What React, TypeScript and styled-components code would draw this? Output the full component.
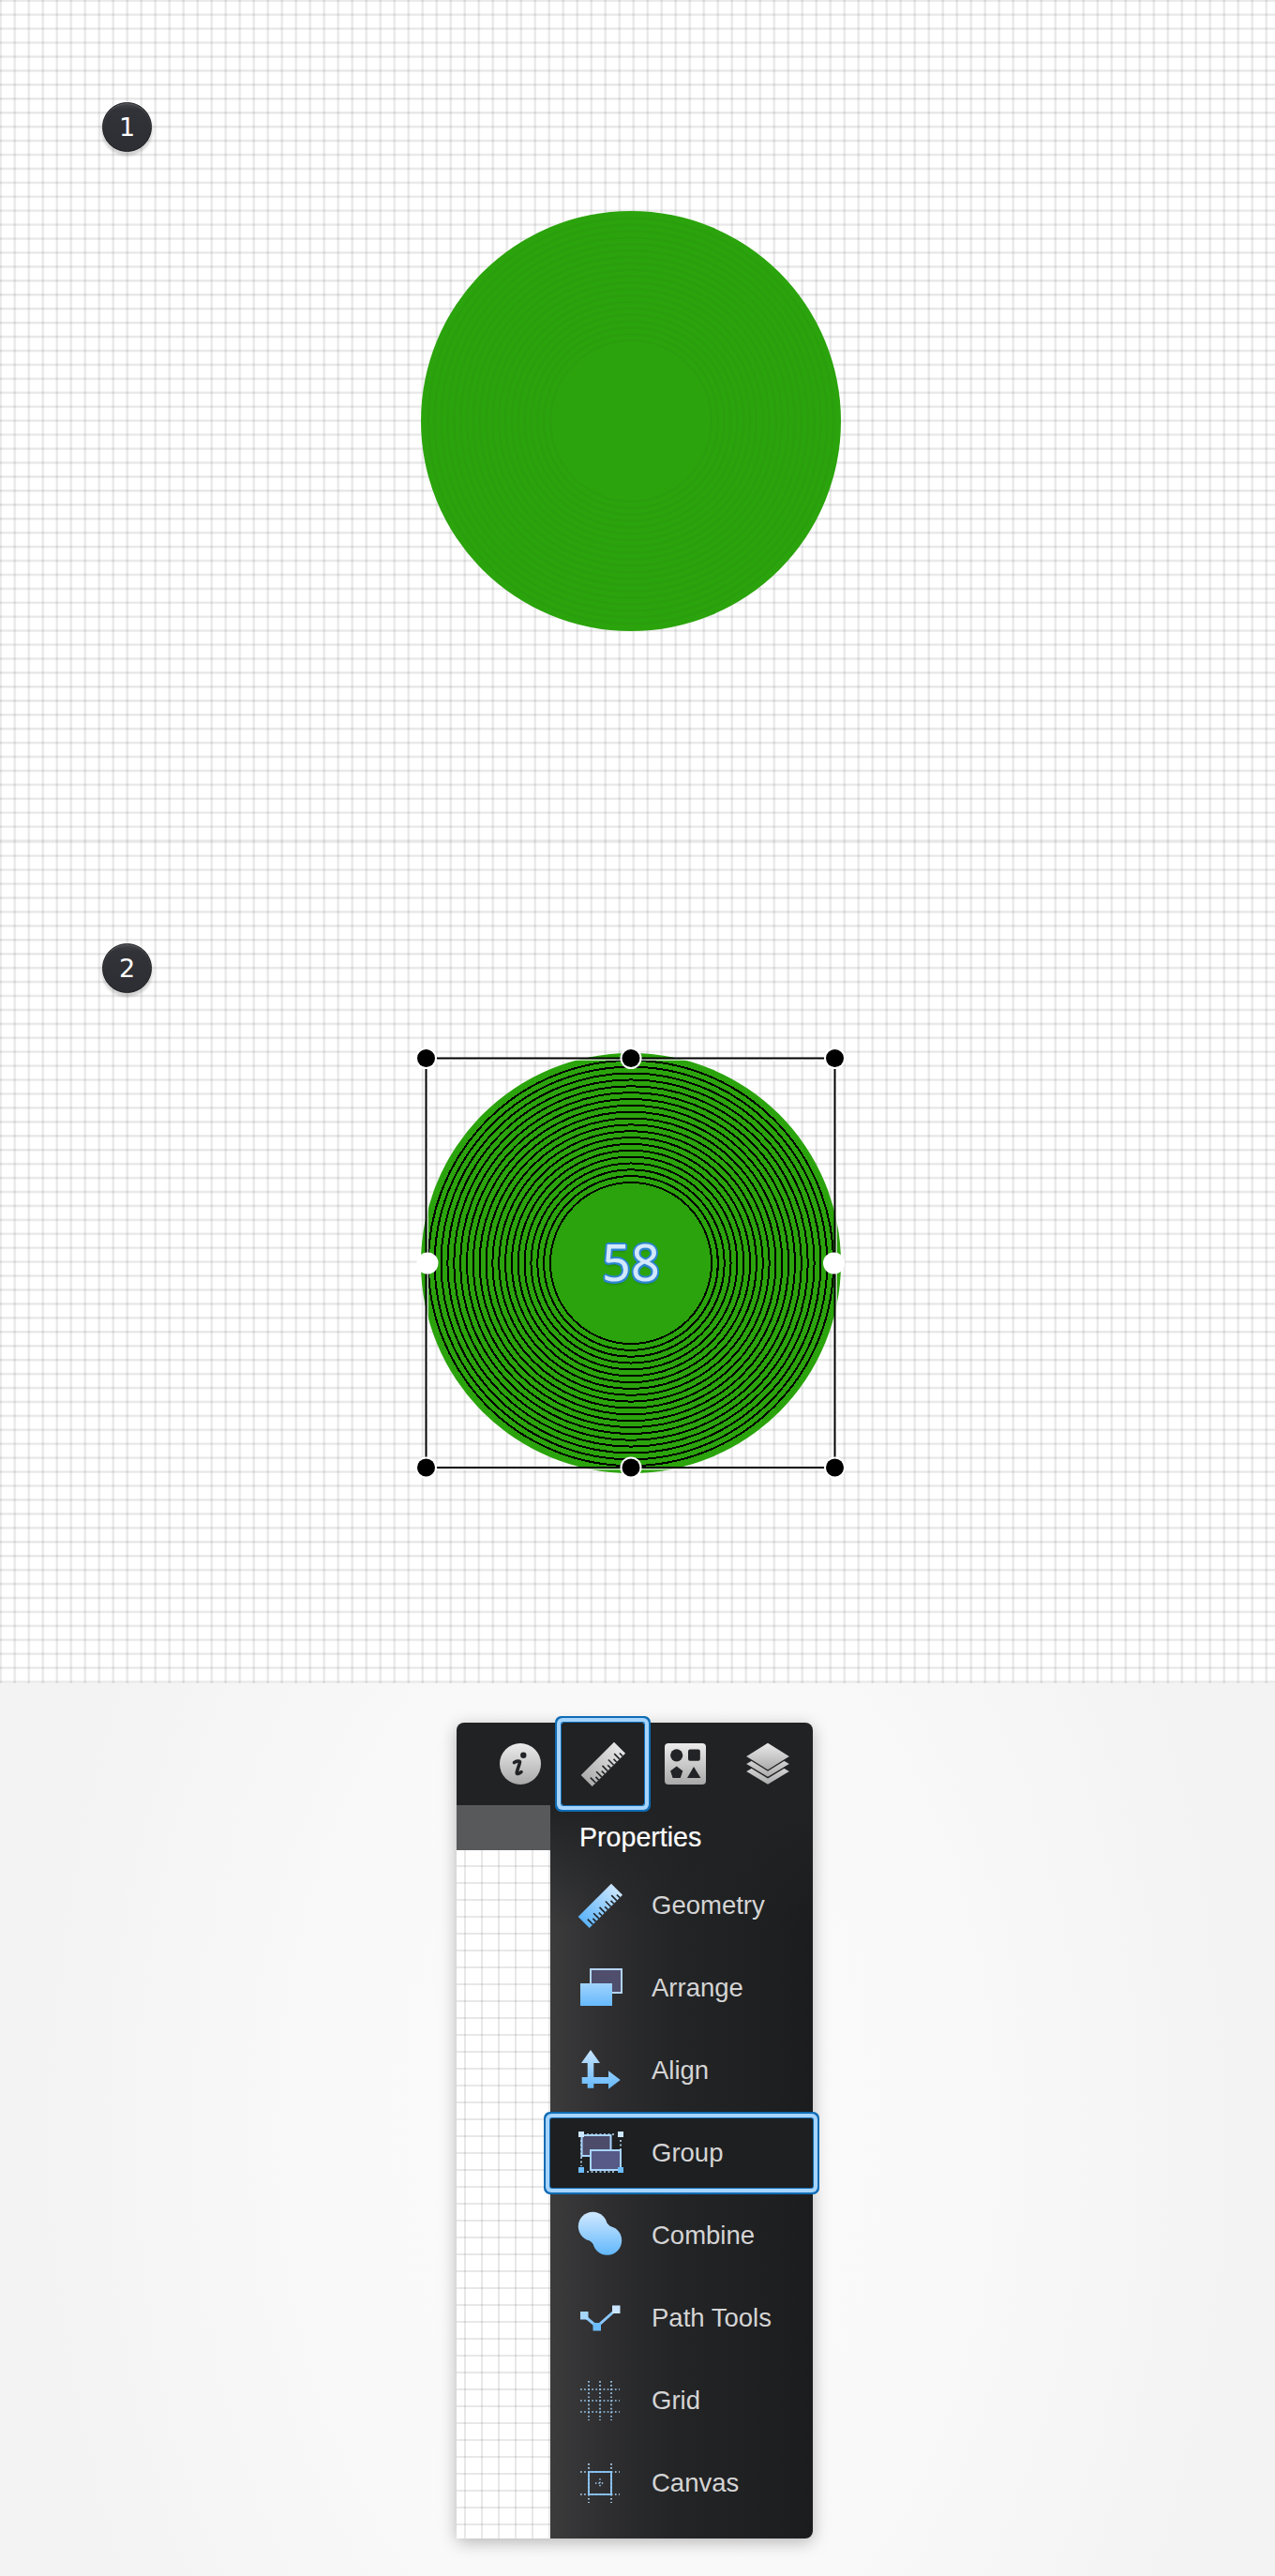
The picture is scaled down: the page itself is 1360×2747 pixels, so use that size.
import React from 'react'
import styled, { createGlobalStyle, css } from 'styled-components'

const GlobalStyle = createGlobalStyle`
  html, body {
    margin: 0;
    padding: 0;
    background: #f3f3f3;
  }
  body {
    font-family: 'Liberation Sans', Arial, sans-serif;
  }
`

const softLine = (angle: string, period: string) => `repeating-linear-gradient(
  ${angle},
  rgba(30, 30, 40, 0.09) 0,
  rgba(30, 30, 40, 0.11) 1px,
  rgba(30, 30, 40, 0.05) 2px,
  rgba(30, 30, 40, 0) 2.6px,
  rgba(30, 30, 40, 0) calc(${period} - 1px),
  rgba(30, 30, 40, 0.09) ${period}
)`

const Page = styled.div`
  width: 1360px;
  height: 2747px;
  overflow: hidden;
`

const Step = styled.section<{ $height: number; $gap: number }>`
  height: ${(p) => p.$height}px;
  padding: 109px 0 0 109px;
  box-sizing: border-box;
  display: flex;
  flex-direction: column;
  align-items: flex-start;
  gap: ${(p) => p.$gap}px;
  background-color: #fff;
  background-image: ${softLine('90deg', '15px')}, ${softLine('180deg', '14.93px')};
`

const Badge = styled.div`
  width: 53px;
  height: 53px;
  border-radius: 50%;
  box-sizing: border-box;
  border: 1px solid #17181b;
  background: linear-gradient(180deg, #46474c 0, #323338 14%, #2d2e33 100%);
  box-shadow: 0 3px 3px 1px rgba(0, 0, 0, 0.17), inset 0 1px 1px rgba(255, 255, 255, 0.16);
  color: #fff;
  font-family: 'DejaVu Sans', sans-serif;
  font-size: 27px;
  display: flex;
  align-items: center;
  justify-content: center;
`

const Figure = styled.div`
  position: relative;
  width: 480px;
  height: 480px;
  margin-left: 324px;
  & > svg {
    display: block;
  }
`

const Counter = styled.span`
  position: absolute;
  left: 0;
  right: 0;
  top: 196px;
  text-align: center;
  font-family: 'Noto Sans', sans-serif;
  font-size: 54px;
  line-height: 84px;
  color: #d2e8fd;
  text-shadow: 2px 0 0 #2c86cf, -2px 0 0 #2c86cf, 0 2px 0 #2c86cf, 0 -2px 0 #2c86cf, 1.5px 1.5px 0 #2c86cf,
    -1.5px 1.5px 0 #2c86cf, 1.5px -1.5px 0 #2c86cf, -1.5px -1.5px 0 #2c86cf, 0 3px 2px rgba(0, 60, 20, 0.35);
`

const Footer = styled.footer`
  height: 952px;
  padding: 42px 0 0 487px;
  box-sizing: border-box;
  background: radial-gradient(ellipse 640px 1000px at 680px 480px, #fbfbfb 0, #f9f9f9 55%, #f3f3f3 100%);
`

const Panel = styled.div`
  width: 380px;
  height: 870px;
  display: flex;
  flex-direction: column;
  border-radius: 8px;
  box-shadow: 0 4px 18px rgba(0, 0, 0, 0.28);
`

const TabBar = styled.div`
  height: 88px;
  padding-left: 24px;
  display: flex;
  background: #212224;
  border-radius: 8px 8px 0 0;
`

const Tab = styled.div<{ $active?: boolean }>`
  position: relative;
  z-index: 2;
  width: 88px;
  height: 88px;
  display: flex;
  align-items: center;
  justify-content: center;
  border-radius: 2px;
  ${(p) =>
    p.$active &&
    css`
      box-shadow: 0 0 0 1px #0f6cb4, 0 0 0 5px #a6d4fd, 0 0 0 7px #0f6cb4;
    `}
`

const PanelBody = styled.div`
  flex: 1;
  display: flex;
  min-height: 0;
`

const CanvasPeek = styled.div`
  width: 100px;
  display: flex;
  flex-direction: column;
`

const RulerStrip = styled.div`
  height: 48px;
  background: #58595b;
`

const PeekGrid = styled.div`
  flex: 1;
  background-color: #fff;
  background-image: repeating-linear-gradient(
    90deg,
    #fff 0,
    #fff 8px,
    #e8e8e9 8px,
    #e8e8e9 10px,
    #fff 10px,
    #fff 18px
  );
  position: relative;
  &::after {
    content: '';
    position: absolute;
    inset: 0;
    background-image: repeating-linear-gradient(
      180deg,
      rgba(0, 0, 0, 0) 0,
      rgba(0, 0, 0, 0) 16px,
      rgba(0, 0, 0, 0.09) 16px,
      rgba(0, 0, 0, 0.09) 18px
    );
  }
`

const Menu = styled.div`
  flex: 1;
  padding-bottom: 15px;
  border-bottom-right-radius: 8px;
  background: linear-gradient(180deg, #212224 0, rgba(33, 34, 36, 0) 130px),
    linear-gradient(90deg, #3b3b3c 0, #2e2e30 22%, #232426 48%, #1f2022 78%, #1b1c1e 100%);
`

const MenuTitle = styled.div`
  height: 63px;
  padding: 6px 0 0 31px;
  box-sizing: border-box;
  display: flex;
  align-items: center;
  color: #fff;
  font-size: 28.6px;
  -webkit-text-stroke: 0.2px #fff;
`

const Row = styled.div<{ $active?: boolean }>`
  position: relative;
  height: 88px;
  padding-left: 31px;
  display: flex;
  align-items: center;
  gap: 33px;
  color: #d4d4d4;
  font-size: 27.5px;
  ${(p) =>
    p.$active &&
    css`
      &::before {
        content: '';
        position: absolute;
        inset: 7px 0;
        background: #1e1f21;
        border-radius: 2px;
        box-shadow: 0 0 0 1px #0f6cb4, 0 0 0 5px #a6d4fd, 0 0 0 7px #0f6cb4;
      }
      & > * {
        position: relative;
      }
    `}
`

const Icon = styled.svg`
  width: 44px;
  height: 44px;
  flex: none;
  overflow: visible;
`

const HiddenDefs = styled.svg`
  position: absolute;
  width: 0;
  height: 0;
`

const Defs = () => (
  <HiddenDefs>
    <defs>
      <linearGradient id="grey" x1="0" y1="0" x2="0" y2="1">
        <stop offset="0" stopColor="#ececec" />
        <stop offset="1" stopColor="#a9a9a9" />
      </linearGradient>
      <linearGradient id="greyDiag" x1="1" y1="0" x2="0" y2="0">
        <stop offset="0" stopColor="#e6e6e6" />
        <stop offset="1" stopColor="#adadad" />
      </linearGradient>
      <linearGradient id="blueDiag" x1="1" y1="0" x2="0" y2="0">
        <stop offset="0" stopColor="#c9e5ff" />
        <stop offset="1" stopColor="#5db4fa" />
      </linearGradient>
      <linearGradient id="blue" gradientUnits="userSpaceOnUse" x1="0" y1="0" x2="0" y2="44">
        <stop offset="0" stopColor="#c9e5ff" />
        <stop offset="1" stopColor="#5fb6fb" />
      </linearGradient>
    </defs>
  </HiddenDefs>
)

const Ruler = ({ fill, tick }: { fill: string; tick: string }) => {
  const ticks = Array.from({ length: 10 }, (_, i) => i)
  return (
    <Icon viewBox="0 0 44 44">
      <g transform="rotate(-45 22 22)">
        <rect x="-3" y="14" width="50" height="17" fill={fill} />
        {ticks.map((i) => (
          <rect key={i} x={1.5 + i * 4.5} y={i % 2 ? 26.5 : 23} width="1.6" height={i % 2 ? 4.5 : 8} fill={tick} />
        ))}
      </g>
    </Icon>
  )
}

const InfoIcon = () => (
  <Icon viewBox="0 0 44 44">
    <circle cx="22" cy="22" r="22" fill="url(#grey)" />
    <circle cx="25.3" cy="12.8" r="3.2" fill="#222326" />
    <path
      d="M15.5 20.5 C18 19 21 18.4 21.5 19.6 C21.8 21 18.4 29 18.2 31.5 C18.1 33.2 20.4 32.6 23 30.6"
      fill="none"
      stroke="#222326"
      strokeWidth="3.6"
      strokeLinecap="round"
    />
  </Icon>
)

const ShapesIcon = () => (
  <Icon viewBox="0 0 44 44">
    <rect width="44" height="44" rx="4" fill="url(#grey)" />
    <circle cx="12.7" cy="12.8" r="6.6" fill="#222326" />
    <rect x="25" y="6.6" width="12.8" height="12.2" rx="2" fill="#222326" />
    <polygon points="12.7,24.6 19.3,29.4 16.8,37 8.6,37 6.1,29.4" fill="#222326" />
    <polygon points="31,25 38.4,37 24,37" fill="#222326" />
  </Icon>
)

const LayersIcon = () => (
  <Icon viewBox="0 0 44 44">
    <g stroke="#212224" strokeWidth="1.4">
      <polygon points="22,16 46,30 22,44.6 -2,30" fill="url(#grey)" />
      <polygon points="22,8 46,22 22,36.6 -2,22" fill="url(#grey)" />
      <polygon points="22,-1 46,14 22,29 -2,14" fill="url(#grey)" />
    </g>
  </Icon>
)

const ArrangeIcon = () => (
  <Icon viewBox="0 0 44 44">
    <rect x="12" y="2" width="33" height="25" fill="#4f4e6c" stroke="#b3d4f3" strokeWidth="2" />
    <rect x="1" y="17" width="34" height="24" fill="url(#blue)" />
  </Icon>
)

const AlignIcon = () => (
  <Icon viewBox="0 0 44 44">
    <path
      d="M12 0 L22 14 L15.3 14 L15.3 29 L31 29 L31 22.3 L43.7 32 L31 41.7 L31 36 L15.3 36 L15.3 40.7 L8.7 40.7 L8.7 36 L2.7 36 L2.7 29 L8.7 29 L8.7 14 L2 14 Z"
      fill="url(#blue)"
    />
  </Icon>
)

const GroupIcon = () => (
  <Icon viewBox="0 0 44 44">
    <path d="M44 8 V36 M8 42 H38 M2 8 V36 M8 2 H38" fill="none" stroke="#b9dcfb" strokeWidth="1.6" strokeDasharray="2 2.5" />
    <rect x="2.5" y="3" width="31" height="22" fill="#4d4c6a" stroke="#a8d4fb" strokeWidth="2" />
    <rect x="12" y="19" width="32" height="21" fill="#575a86" stroke="#a8d4fb" strokeWidth="2" />
    <rect x="-1" y="-1" width="6" height="6" fill="#cbe6ff" />
    <rect x="41" y="-1" width="6" height="6" fill="#cbe6ff" />
    <rect x="-1" y="37" width="6" height="6" fill="#6cbcfb" />
    <rect x="41" y="37" width="6" height="6" fill="#6cbcfb" />
  </Icon>
)

const CombineIcon = () => (
  <Icon viewBox="0 0 44 44">
    <g fill="url(#blue)">
      <circle cx="14.3" cy="12.3" r="15.5" />
      <circle cx="29.7" cy="27.3" r="15.5" />
      <path d="M25.5 5 L37 16 L18.5 34.6 L7 23.6 Z" />
    </g>
  </Icon>
)

const PathToolsIcon = () => (
  <Icon viewBox="0 0 44 44">
    <path d="M5 19.5 L18.7 31 L39 13" fill="none" stroke="#8cc8fc" strokeWidth="3" />
    <rect x="1" y="15" width="8.5" height="8.5" fill="#a5d6fd" />
    <rect x="14.5" y="27" width="8.5" height="8.5" fill="#6cbcfb" />
    <rect x="35" y="8.5" width="8.5" height="8.5" fill="#c9e5ff" />
  </Icon>
)

const gridPositions = [10, 22, 34]

const GridIcon = () => (
  <Icon viewBox="0 0 44 44">
    <g stroke="#9cc9ee" strokeWidth="1.7" strokeDasharray="1.7 2.4" fill="none">
      {gridPositions.map((p) => (
        <React.Fragment key={p}>
          <line x1="1" y1={p} x2="43" y2={p} />
          <line x1={p} y1="1" x2={p} y2="43" />
        </React.Fragment>
      ))}
    </g>
  </Icon>
)

const CanvasIcon = () => (
  <Icon viewBox="0 0 44 44">
    <g stroke="#b5daf9" strokeWidth="1.7" strokeDasharray="1.7 2.4" fill="none">
      <path d="M1 10 H43 M1 34 H43 M10 1 V43 M34 1 V43" />
    </g>
    <rect x="10" y="10" width="24" height="24" fill="none" stroke="#8cc8fc" strokeWidth="1.8" />
    <g stroke="#a8d4fb" strokeWidth="1.4" strokeDasharray="1.4 2" fill="none">
      <path d="M17 22 H27 M22 17 V27" />
    </g>
  </Icon>
)

const menuItems = [
  { label: 'Geometry', icon: <Ruler fill="url(#blueDiag)" tick="#1f2022" /> },
  { label: 'Arrange', icon: <ArrangeIcon /> },
  { label: 'Align', icon: <AlignIcon /> },
  { label: 'Group', icon: <GroupIcon />, active: true },
  { label: 'Combine', icon: <CombineIcon /> },
  { label: 'Path Tools', icon: <PathToolsIcon /> },
  { label: 'Grid', icon: <GridIcon /> },
  { label: 'Canvas', icon: <CanvasIcon /> },
]

const rings = Array.from({ length: 20 }, (_, i) => 86 + i * 6.85)

const FlatDisc = () => (
  <svg width="480" height="480" viewBox="0 0 480 480">
    <circle cx="240" cy="240" r="224" fill="#2ba30c" />
    {rings.map((r) => (
      <circle key={r} cx="240" cy="240" r={r} fill="none" stroke="#2a9b10" strokeWidth="2" strokeOpacity="0.55" />
    ))}
  </svg>
)

const handles = [
  { x: 21.5, y: 21.5, light: false },
  { x: 240, y: 21.5, light: false },
  { x: 457.5, y: 21.5, light: false },
  { x: 23, y: 240, light: true },
  { x: 456.5, y: 240, light: true },
  { x: 21.5, y: 458, light: false },
  { x: 240, y: 458, light: false },
  { x: 457.5, y: 458, light: false },
]

const RingedDisc = () => (
  <svg width="480" height="480" viewBox="0 0 480 480">
    <circle cx="240" cy="240" r="224" fill="#2ba30c" />
    <g shapeRendering="crispEdges">
      {rings.map((r) => (
        <circle key={r} cx="240" cy="240" r={r} fill="none" stroke="#000" strokeWidth="2" />
      ))}
    </g>
    <rect x="22.5" y="22.5" width="436" height="436.5" fill="none" stroke="#fff" strokeWidth="3" strokeOpacity="0.7" />
    <rect x="21.5" y="21.5" width="436" height="436.5" fill="none" stroke="#000" strokeWidth="2" />
    {handles.map((h) => (
      <g key={`${h.x}-${h.y}`}>
        <circle cx={h.x} cy={h.y} r="11.5" fill="#fff" />
        {!h.light && <circle cx={h.x} cy={h.y} r="9.5" fill="#000" />}
      </g>
    ))}
  </svg>
)

export default function App() {
  return (
    <Page>
      <GlobalStyle />
      <Defs />
      <Step $height={897} $gap={47}>
        <Badge>1</Badge>
        <Figure>
          <FlatDisc />
        </Figure>
      </Step>
      <Step $height={898} $gap={48}>
        <Badge>2</Badge>
        <Figure>
          <RingedDisc />
          <Counter>58</Counter>
        </Figure>
      </Step>
      <Footer>
        <Panel>
          <TabBar>
            <Tab>
              <InfoIcon />
            </Tab>
            <Tab $active>
              <Ruler fill="url(#greyDiag)" tick="#212224" />
            </Tab>
            <Tab>
              <ShapesIcon />
            </Tab>
            <Tab>
              <LayersIcon />
            </Tab>
          </TabBar>
          <PanelBody>
            <CanvasPeek>
              <RulerStrip />
              <PeekGrid />
            </CanvasPeek>
            <Menu>
              <MenuTitle>Properties</MenuTitle>
              {menuItems.map((item) => (
                <Row key={item.label} $active={item.active}>
                  {item.icon}
                  <span>{item.label}</span>
                </Row>
              ))}
            </Menu>
          </PanelBody>
        </Panel>
      </Footer>
    </Page>
  )
}
